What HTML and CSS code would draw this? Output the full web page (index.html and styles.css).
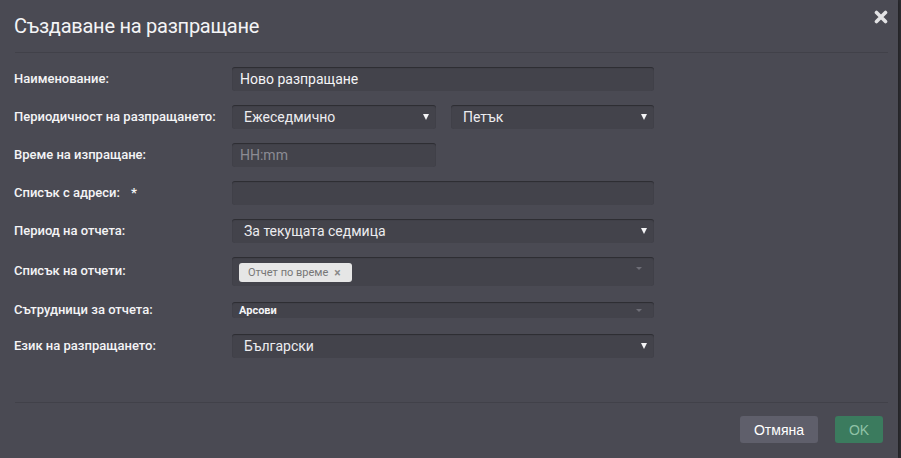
FILE: index.html
```html
<!DOCTYPE html>
<html lang="bg">
<head>
<meta charset="utf-8">
<title>Създаване на разпращане</title>
<link rel="stylesheet" href="styles.css">
</head>
<body>
<div class="dialog">
  <header class="dialog-header">
    <h1 class="dialog-title">Създаване на разпращане</h1>
    <button class="close" type="button" aria-label="Затвори">
      <svg width="14" height="14" viewBox="0 0 14 14"><path d="M2.5 2.5 L11.5 11.5 M11.5 2.5 L2.5 11.5" stroke="#e2e2e4" stroke-width="3.6" stroke-linecap="round"/></svg>
    </button>
  </header>

  <form class="dialog-body">
    <div class="row">
      <label class="label">Наименование:</label>
      <div class="field input">Ново разпращане</div>
    </div>
    <div class="row">
      <label class="label">Периодичност на разпращането:</label>
      <div class="pair">
        <div class="field select w-left"><span>Ежеседмично</span><i class="caret"></i></div>
        <div class="field select w-right"><span>Петък</span><i class="caret"></i></div>
      </div>
    </div>
    <div class="row">
      <label class="label">Време на изпращане:</label>
      <div class="field input placeholder w-left">HH:mm</div>
    </div>
    <div class="row">
      <label class="label">Списък с адреси: <span class="req">*</span></label>
      <div class="field input"></div>
    </div>
    <div class="row">
      <label class="label">Период на отчета:</label>
      <div class="field select"><span>За текущата седмица</span><i class="caret"></i></div>
    </div>
    <div class="row row-multi">
      <label class="label">Списък на отчети:</label>
      <div class="field multi">
        <span class="tag">Отчет по време <b class="tag-x">×</b></span>
        <i class="caret caret-dim"></i>
      </div>
    </div>
    <div class="row row-small">
      <label class="label">Сътрудници за отчета:</label>
      <div class="field small"><span>Арсови</span><i class="caret caret-dim"></i></div>
    </div>
    <div class="row">
      <label class="label">Език на разпращането:</label>
      <div class="field select"><span>Български</span><i class="caret"></i></div>
    </div>
  </form>

  <footer class="dialog-footer">
    <button class="btn btn-cancel" type="button">Отмяна</button>
    <button class="btn btn-ok" type="button">OK</button>
  </footer>
</div>
</body>
</html>
```

FILE: styles.css
```css
html, body {
  margin: 0;
  padding: 0;
  height: 100%;
}
body {
  background: #2e2e33;
  font-family: Roboto, "Noto Sans", "Liberation Sans", sans-serif;
  color: #ffffff;
  overflow: hidden;
}
.dialog {
  width: 898px;
  height: 458px;
  background: #4a4a53;
  display: flex;
  flex-direction: column;
  box-shadow: 0 0 4px rgba(0,0,0,0.5);
}
.dialog-header {
  margin: 0 10px 0 15px;
  height: 52px;
  border-bottom: 1px solid #414149;
  display: flex;
  align-items: flex-start;
  justify-content: space-between;
}
.dialog-title {
  margin: 0 0 0 -1px;
  padding-top: 14px;
  font-size: 20px;
  font-weight: 400;
  line-height: 24px;
  color: #f4f4f6;
  letter-spacing: -0.25px;
}
.close {
  background: none;
  border: 0;
  padding: 0;
  margin: 10px 0 0 0;
  width: 14px;
  height: 14px;
  display: block;
}
.close svg { display: block; }

.dialog-body {
  margin: 0 10px 0 15px;
  padding-top: 14px;
  display: flex;
  flex-direction: column;
  gap: 14px;
}
.row {
  display: grid;
  grid-template-columns: 217px 422px;
  align-items: center;
  height: 24px;
}
.row-multi { height: 29px; }
.row-small { height: 20px; }
.label {
  margin-left: -1px;
  font-size: 13px;
  font-weight: 500;
  color: #f4f4f6;
  line-height: 15px;
  padding-bottom: 2px;
}
.req {
  margin-left: 8px;
  font-size: 13px;
  font-weight: 700;
}
.field {
  box-sizing: border-box;
  height: 24px;
  background: #43434b;
  border-radius: 3px;
  box-shadow: inset 0 1px 1px rgba(0,0,0,0.35);
  font-size: 14px;
  color: #f4f4f6;
  display: flex;
  align-items: center;
}
.input { padding: 0 8px; }
.placeholder { color: #8c8c94; }
.select {
  padding: 0 7px 0 12px;
  justify-content: space-between;
  color: #ececef;
}
.select span, .small span { flex: 1; }
.pair {
  display: flex;
  gap: 15px;
}
.w-left { width: 204px; }
.w-right { width: 203px; }
.caret {
  width: 0;
  height: 0;
  border-left: 3px solid transparent;
  border-right: 3px solid transparent;
  border-top: 6px solid #f4f4f6;
}
.caret-dim {
  border-left-width: 3px;
  border-right-width: 3px;
  border-top: 3px solid #6e6e77;
  margin-right: 5px;
}
.multi {
  height: 29px;
  padding: 0 7px;
  justify-content: space-between;
  align-items: flex-start;
}
.multi .caret-dim { margin-top: 10px; }
.tag {
  margin-top: 6px;
  height: 19px;
  box-sizing: border-box;
  padding: 0 8px 0 9px;
  background: #e6e6e6;
  border-radius: 3px;
  color: #777;
  font-size: 11px;
  display: flex;
  align-items: center;
  width: 113px;
}
.tag-x {
  margin-left: 6px;
  color: #8a8a8a;
  font-size: 12px;
  font-weight: 700;
}
.small {
  height: 16px;
  padding: 0 7px;
  font-size: 11px;
  font-weight: 700;
  color: #f4f4f6;
}

.dialog-footer {
  margin: auto 10px 0 15px;
  border-top: 1px solid #414149;
  padding: 13px 5px 15px 0;
  display: flex;
  justify-content: flex-end;
  gap: 17px;
}
.btn {
  height: 27px;
  border: 0;
  border-radius: 3px;
  font-family: "Liberation Sans", Arial, sans-serif;
  font-size: 14px;
  padding: 0;
}
.btn-cancel {
  width: 78px;
  background: #5f5f6b;
  color: #ffffff;
}
.btn-ok {
  width: 48px;
  background: #3b7b5e;
  color: #8fc2a6;
}
```
